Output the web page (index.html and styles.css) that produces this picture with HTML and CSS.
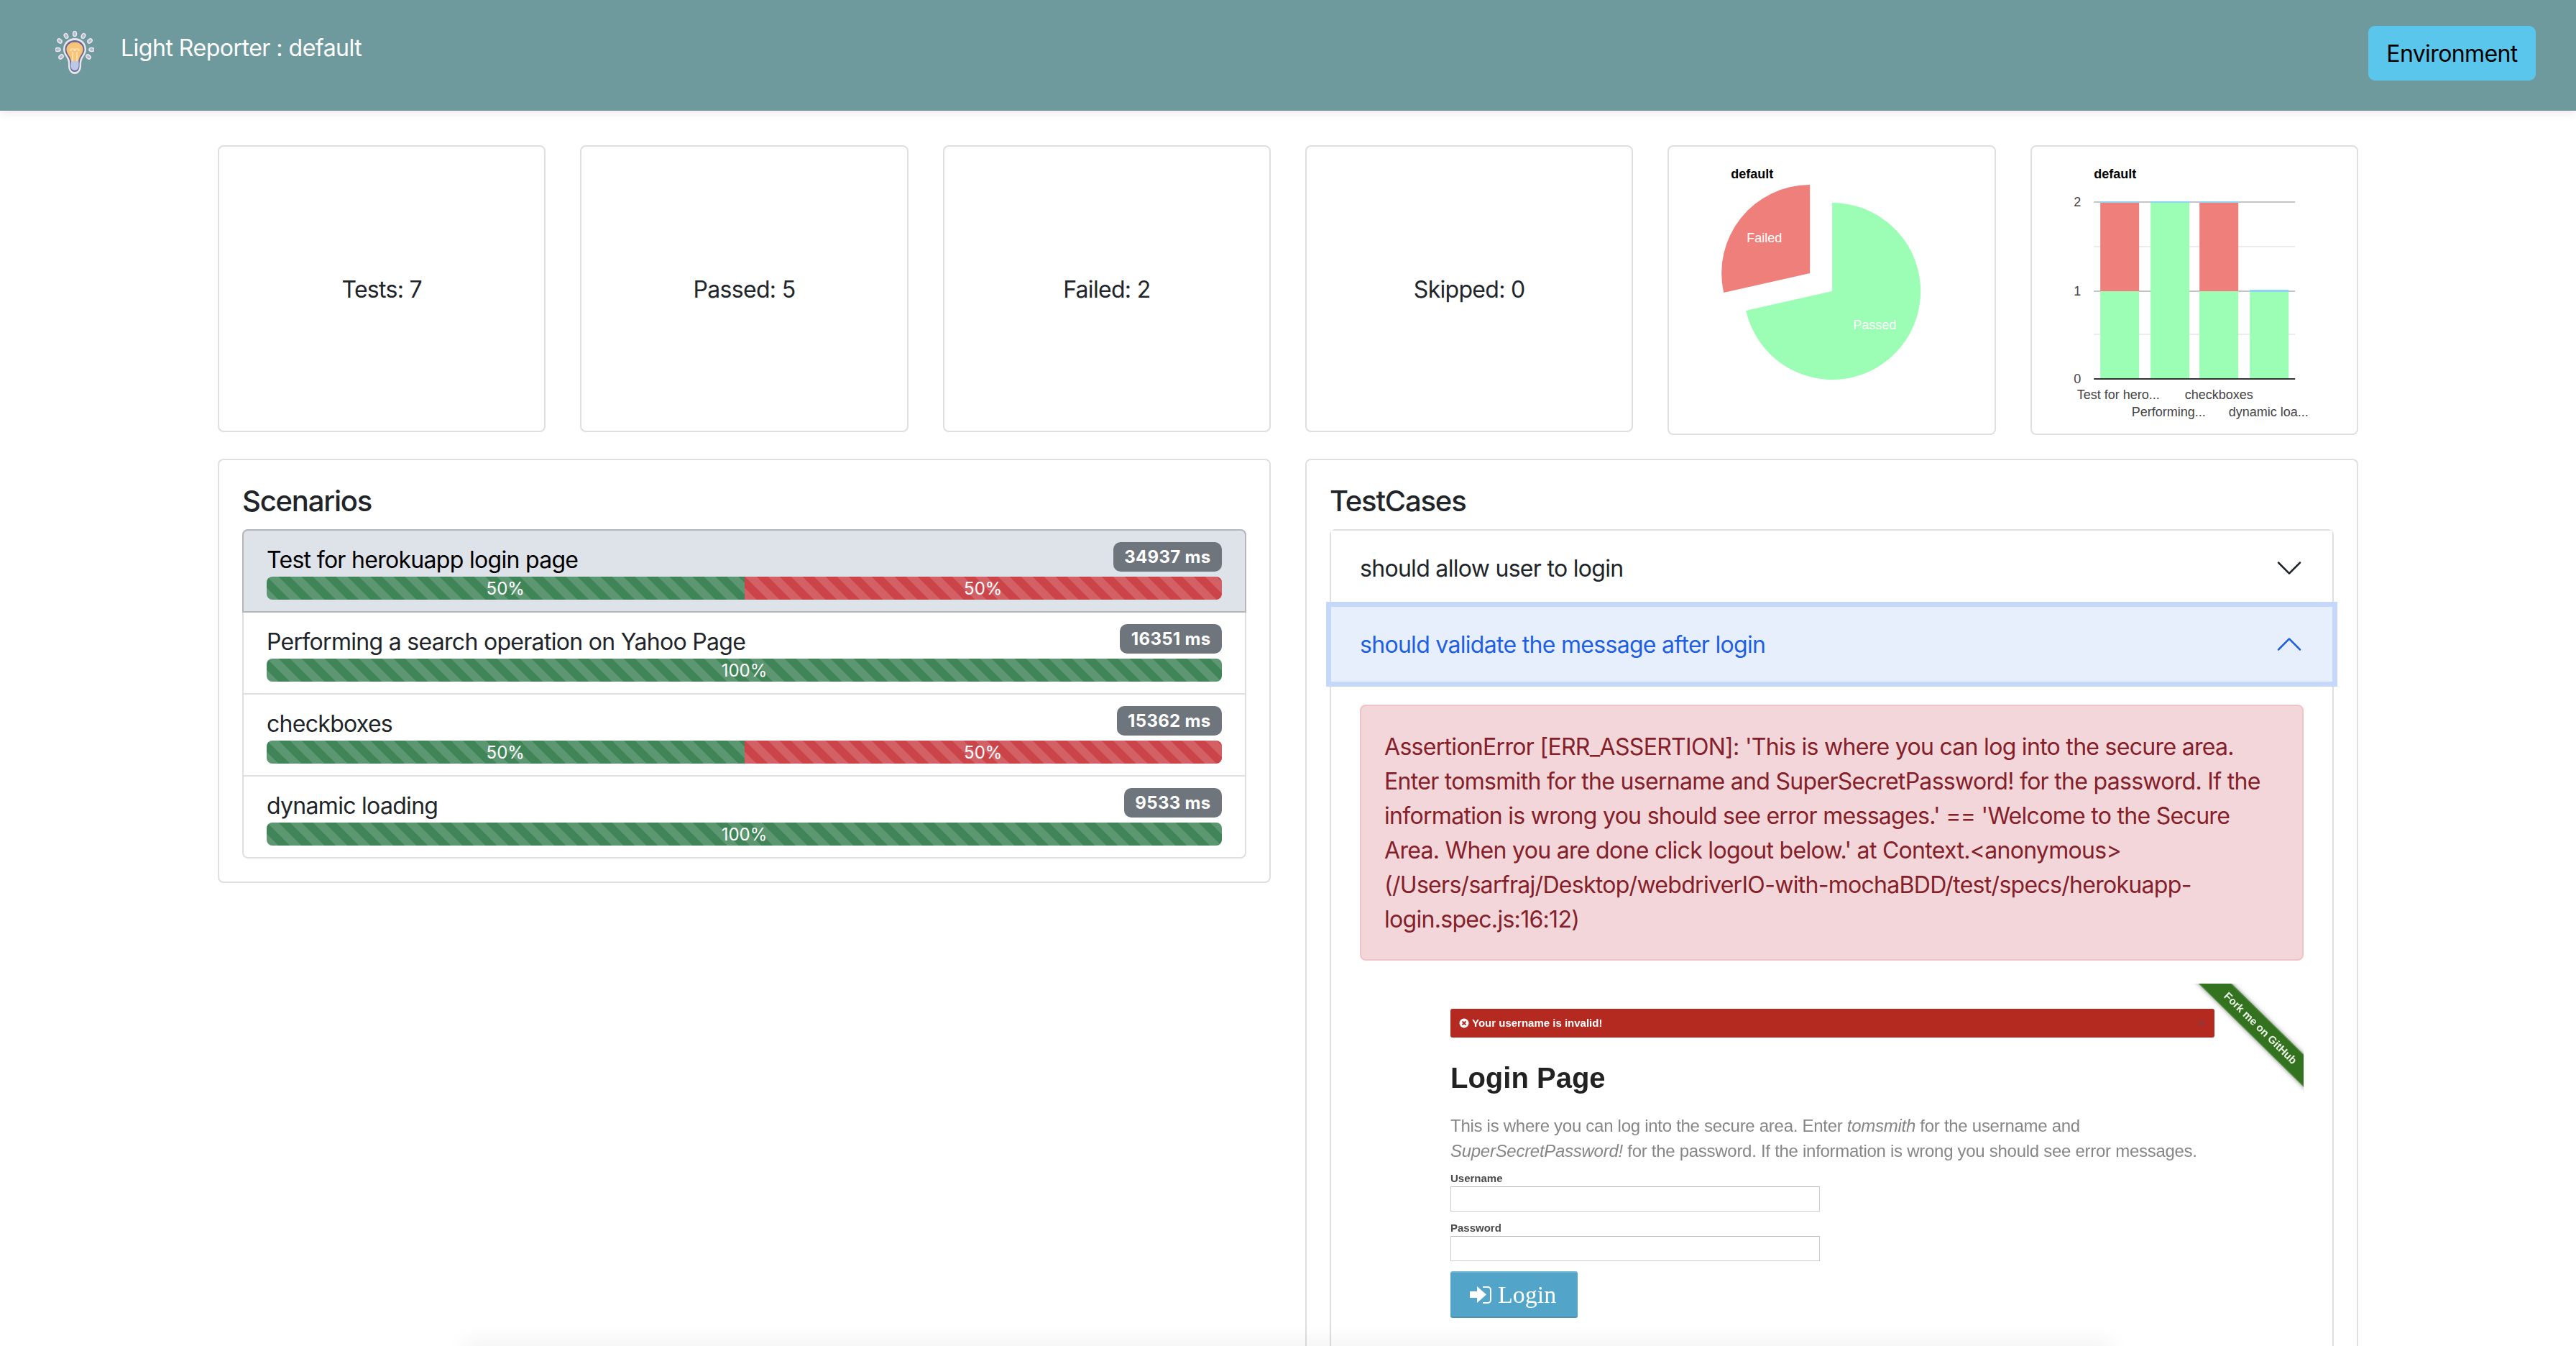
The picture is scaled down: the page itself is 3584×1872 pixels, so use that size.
FILE: index.html

```html
<!DOCTYPE html>
<html lang="en">
<head>
  <meta charset="UTF-8">
  <title>Light Reporter</title>
  <link rel="stylesheet" href="styles.css">
</head>
<body>

  <!-- Top bar -->
  <nav class="navbar">
    <div class="brand">
      <svg class="logo" viewBox="0 0 54 62">
        <g fill="#b9b6cf" stroke="#e9e9ee" stroke-width="1.500">
          <ellipse cx="27" cy="4" rx="2.500" ry="3.500"/>
          <ellipse cx="15" cy="7" rx="2.500" ry="3.500" transform="rotate(-25 15 7)"/>
          <ellipse cx="39" cy="7" rx="2.500" ry="3.500" transform="rotate(25 39 7)"/>
          <ellipse cx="6" cy="14" rx="2.500" ry="3.500" transform="rotate(-50 6 14)"/>
          <ellipse cx="48" cy="14" rx="2.500" ry="3.500" transform="rotate(50 48 14)"/>
          <ellipse cx="3.500" cy="26" rx="3.500" ry="2.500"/>
          <ellipse cx="50.500" cy="26" rx="3.500" ry="2.500"/>
          <ellipse cx="8" cy="36" rx="2.500" ry="3.500" transform="rotate(50 8 36)"/>
          <ellipse cx="46" cy="36" rx="2.500" ry="3.500" transform="rotate(-50 46 36)"/>
        </g>
        <path d="M27 10c-9.500 0-16 7-16 15.500 0 6 3.500 9.500 5.500 13.500 1.500 3 1.500 6 1.500 10 0 6 4 11 9 11s9-5 9-11c0-4 0-7 1.500-10 2-4 5.500-7.500 5.500-13.500C43 17 36.500 10 27 10z" fill="#e6e6ec"/>
        <path d="M27 13c-8 0-13.500 5.500-13.500 12.500 0 5 3 8 5 12 1.500 2.500 2 6 2 11 0 5 2.500 8.500 6.500 8.500s6.500-3.500 6.500-8.500c0-5 .5-8.500 2-11 2-4 5-7 5-12C40.500 18.500 35 13 27 13z" fill="#6a6597"/>
        <path d="M27 15.500c-6.500 0-11.500 4.500-11.500 10 0 4.500 2.800 7.500 4.800 11.500 .8 1.500 1.200 3 1.500 5h10.400c.3-2 .7-3.500 1.500-5 2-4 4.800-7 4.800-11.500 0-5.500-5-10-11.500-10z" fill="#f8c477"/>
        <path d="M22 42h10.400c.2 2 .2 4 .2 6 0 4-2 7-5.600 7s-5.500-3-5.500-7c0-2 .2-4 .5-6z" fill="#bcc8e6"/>
        <path d="M24 42V29m6 13V29M21 28a3 3 0 0 1 6 0 3 3 0 0 1 6 0" fill="none" stroke="#f9e3c0" stroke-width="1.500"/>
      </svg>
      <span class="brand-name">Light Reporter : default</span>
    </div>
    <button class="env-btn">Environment</button>
  </nav>

  <div class="content">

    <!-- Summary cards -->
    <div class="summary">
      <div class="card stat">Tests: 7</div>
      <div class="card stat">Passed: 5</div>
      <div class="card stat">Failed: 2</div>
      <div class="card stat">Skipped: 0</div>

      <div class="card chart">
        <svg viewBox="2 2 452 399">
          <text class="chart-title" x="88" y="46">default</text>
          <path d="M229 203 V80 A123 123 0 1 1 109 230 Z" fill="#9bfeb4"/>
          <path d="M198 178 V55 A123 123 0 0 0 78 205 Z" fill="#ef7f7a"/>
          <text class="slice-label" x="110" y="135">Failed</text>
          <text class="slice-label" x="258" y="256">Passed</text>
        </svg>
      </div>

      <div class="card chart">
        <svg viewBox="2 2 452 399">
          <text class="chart-title" x="88" y="46">default</text>
          <line class="grid-minor" x1="88" x2="368" y1="141" y2="141"/>
          <line class="grid-minor" x1="88" x2="368" y1="263" y2="263"/>
          <line class="grid-major" x1="88" x2="368" y1="79" y2="79"/>
          <line class="grid-major" x1="88" x2="368" y1="203" y2="203"/>

          <rect x="97" y="80" width="54" height="123" fill="#ef7f7a"/>
          <rect x="97" y="203" width="54" height="121" fill="#9bfeb4"/>
          <rect x="97" y="78" width="54" height="2" fill="#8dd4f6"/>

          <rect x="167" y="80" width="54" height="244" fill="#9bfeb4"/>
          <rect x="167" y="78" width="54" height="2" fill="#8dd4f6"/>

          <rect x="235" y="80" width="54" height="123" fill="#ef7f7a"/>
          <rect x="235" y="203" width="54" height="121" fill="#9bfeb4"/>
          <rect x="235" y="78" width="54" height="2" fill="#8dd4f6"/>

          <rect x="305" y="204" width="54" height="120" fill="#9bfeb4"/>
          <rect x="305" y="201" width="54" height="3" fill="#8dd4f6"/>

          <line class="grid-base" x1="88" x2="368" y1="325" y2="325"/>

          <text class="axis-label" x="65" y="85" text-anchor="middle">2</text>
          <text class="axis-label" x="65" y="209" text-anchor="middle">1</text>
          <text class="axis-label" x="65" y="331" text-anchor="middle">0</text>
          <text class="axis-label" x="122" y="353" text-anchor="middle">Test for hero...</text>
          <text class="axis-label" x="262" y="353" text-anchor="middle">checkboxes</text>
          <text class="axis-label" x="192" y="377" text-anchor="middle">Performing...</text>
          <text class="axis-label" x="331" y="377" text-anchor="middle">dynamic loa...</text>
        </svg>
      </div>
    </div>

    <div class="details">

      <!-- Scenarios -->
      <div class="card panel">
        <h5>Scenarios</h5>
        <ul class="list-group">
          <li class="list-item active">
            <div class="item-head"><span class="item-name">Test for herokuapp login page</span><span class="badge">34937 ms</span></div>
            <div class="progress">
              <div class="bar bar-pass" style="width: 50%">50%</div>
              <div class="bar bar-fail" style="width: 50%">50%</div>
            </div>
          </li>
          <li class="list-item">
            <div class="item-head"><span class="item-name">Performing a search operation on Yahoo Page</span><span class="badge">16351 ms</span></div>
            <div class="progress">
              <div class="bar bar-pass" style="width: 100%">100%</div>
            </div>
          </li>
          <li class="list-item">
            <div class="item-head"><span class="item-name">checkboxes</span><span class="badge">15362 ms</span></div>
            <div class="progress">
              <div class="bar bar-pass" style="width: 50%">50%</div>
              <div class="bar bar-fail" style="width: 50%">50%</div>
            </div>
          </li>
          <li class="list-item">
            <div class="item-head"><span class="item-name">dynamic loading</span><span class="badge">9533 ms</span></div>
            <div class="progress">
              <div class="bar bar-pass" style="width: 100%">100%</div>
            </div>
          </li>
        </ul>
      </div>

      <!-- Test cases -->
      <div class="card panel">
        <h5>TestCases</h5>
        <div class="accordion">
          <div class="acc-item">
            <button class="acc-btn">
              <span class="acc-title">should allow user to login</span>
              <svg class="chevron" viewBox="0 0 16 16"><path fill-rule="evenodd" d="M1.646 4.646a.5.5 0 0 1 .708 0L8 10.293l5.646-5.647a.5.5 0 0 1 .708.708l-6 6a.5.5 0 0 1-.708 0l-6-6a.5.5 0 0 1 0-.708z"/></svg>
            </button>
          </div>
          <div class="acc-item open">
            <button class="acc-btn">
              <span class="acc-title">should validate the message after login</span>
              <svg class="chevron" viewBox="0 0 16 16"><path fill-rule="evenodd" d="M1.646 4.646a.5.5 0 0 1 .708 0L8 10.293l5.646-5.647a.5.5 0 0 1 .708.708l-6 6a.5.5 0 0 1-.708 0l-6-6a.5.5 0 0 1 0-.708z"/></svg>
            </button>
            <div class="acc-body">
              <div class="alert-error">AssertionError [ERR_ASSERTION]: 'This is where you can log into the secure area. Enter tomsmith for the username and SuperSecretPassword! for the password. If the information is wrong you should see error messages.' == 'Welcome to the Secure Area. When you are done click logout below.' at Context.&lt;anonymous&gt; (/Users/sarfraj/Desktop/webdriverIO-with-mochaBDD/test/specs/herokuapp-login.spec.js:16:12)</div>

              <!-- failure screenshot -->
              <div class="shot">
                <div class="ribbon">Fork me on GitHub</div>
                <div class="shot-flash">
                  <span class="flash-msg">
                    <svg class="flash-icon" viewBox="0 0 14 14"><circle cx="7" cy="7" r="6.500" fill="#fff"/><path d="M4.500 4.500l5 5m0-5l-5 5" stroke="#b42a20" stroke-width="2"/></svg>
                    Your username is invalid!
                  </span>
                  <span class="flash-close">&#10005;</span>
                </div>
                <h2 class="shot-title">Login Page</h2>
                <p class="shot-text">This is where you can log into the secure area. Enter <em>tomsmith</em> for the username and<br><em>SuperSecretPassword!</em> for the password. If the information is wrong you should see error messages.</p>
                <label class="shot-label">Username</label>
                <div class="shot-input"></div>
                <label class="shot-label">Password</label>
                <div class="shot-input"></div>
                <div class="shot-btn">
                  <svg class="signin-icon" viewBox="0 0 31 26"><path d="M0 8h10V1l13 11.500L10 24v-7H0z" fill="#fff"/><path d="M18 1h7a5 5 0 0 1 5 5v14a5 5 0 0 1-5 5h-7v-2h7a3 3 0 0 0 3-3V6a3 3 0 0 0-3-3h-7z" fill="#fff"/></svg>
                  <span>Login</span>
                </div>
              </div>
            </div>
          </div>
        </div>
      </div>

    </div>
  </div>

  <div class="bottom-fade"></div>

</body>
</html>
```

FILE: styles.css

```css
html, body {
  height: 100%;
}

body {
  margin: 0;
  height: 1872px;
  overflow: hidden;
  position: relative;
  background: #fff;
  color: #212529;
  font-family: Inter, "Noto Sans", sans-serif;
  font-size: 32px;
  line-height: 48px;
  letter-spacing: -0.700px;
}

/* Top bar */
.navbar {
  height: 154px;
  box-sizing: border-box;
  display: flex;
  justify-content: space-between;
  align-items: flex-start;
  background: #6f9a9d;
  padding: 36px 56px 0 77px;
  box-shadow: 0 4px 12px rgba(0, 0, 0, 0.08);
}

.brand {
  display: flex;
  align-items: flex-start;
  gap: 37px;
}

.logo {
  width: 54px;
  height: 62px;
  margin-top: 7px;
  filter: blur(0.600px);
}

.brand-name {
  margin-top: 7px;
  color: #fff;
  letter-spacing: -0.500px;
}

.env-btn {
  width: 233px;
  height: 76px;
  padding: 2px 0 0;
  border: 0;
  border-radius: 9px;
  background: #5bc6ec;
  color: #000;
  font: inherit;
  letter-spacing: -0.600px;
}

.content {
  padding: 48px 303px 0 303px;
}

.card {
  box-sizing: border-box;
  border: 2px solid #dfdfdf;
  border-radius: 8px;
  background: #fff;
}

/* Summary row */
.summary {
  display: grid;
  grid-template-columns: repeat(6, 1fr);
  gap: 48px;
  align-items: start;
}

.stat {
  height: 399px;
  padding-top: 2px;
  display: flex;
  align-items: center;
  justify-content: center;
}

.chart {
  height: 403px;
}

.chart svg {
  display: block;
  width: 100%;
  height: 100%;
}

.chart text {
  font-family: "Liberation Sans", Arial, sans-serif;
  font-size: 18px;
  letter-spacing: 0;
}

.chart .chart-title {
  font-weight: bold;
  fill: #000;
}

.chart .slice-label {
  fill: #fff;
}

.chart .axis-label {
  fill: #444;
}

.grid-major {
  stroke: #c4c4c4;
  stroke-width: 2;
}

.grid-minor {
  stroke: #ebebeb;
  stroke-width: 2;
}

.grid-base {
  stroke: #333;
  stroke-width: 2;
}

/* Lower panels */
.details {
  display: grid;
  grid-template-columns: 1fr 1fr;
  gap: 48px;
  align-items: start;
  margin-top: 33px;
}

.panel {
  padding: 32px;
}

h5 {
  margin: 0 0 14px;
  font-size: 40px;
  font-weight: 500;
  line-height: 50px;
  letter-spacing: -1.200px;
}

.list-group {
  margin: 0;
  padding: 0;
  list-style: none;
  border: 2px solid #dfdfdf;
  border-radius: 8px;
}

.list-item {
  padding: 16px 32px;
  border-top: 2px solid #dfdfdf;
}

.list-item:first-child {
  border-top: 0;
}

.list-item.active {
  background: #dee2e9;
  color: #000;
  margin: -2px -2px 0;
  border: 2px solid #b4b6bc;
  border-radius: 8px 8px 0 0;
}

.list-item.active + .list-item {
  border-top: 0;
}

.item-head {
  display: flex;
  justify-content: space-between;
  align-items: flex-start;
  height: 48px;
}

.item-name {
  padding-top: 1px;
}

.badge {
  padding: 9px 15.600px 8px;
  border-radius: 10px;
  background: #6e757d;
  color: #fff;
  font-size: 24px;
  font-weight: 700;
  line-height: 24px;
  letter-spacing: 0.300px;
}

.progress {
  display: flex;
  height: 32px;
  overflow: hidden;
  border-radius: 8px;
  background: #e9ecef;
}

.bar {
  text-align: center;
  color: #fff;
  font-size: 24px;
  line-height: 34px;
  letter-spacing: 0;
  background-size: 32px 32px;
  background-image: linear-gradient(45deg, rgba(255, 255, 255, 0.15) 25%, transparent 25%, transparent 50%, rgba(255, 255, 255, 0.15) 50%, rgba(255, 255, 255, 0.15) 75%, transparent 75%, transparent);
}

.bar-pass {
  background-color: #408558;
}

.bar-fail {
  background-color: #cb444a;
}

/* Accordion */
.accordion {
  border: 2px solid #dfdfdf;
  border-radius: 8px 8px 0 0;
  border-bottom: 0;
}

.acc-item + .acc-item {
  border-top: 2px solid #dfdfdf;
}

.acc-btn {
  width: 100%;
  display: flex;
  justify-content: space-between;
  align-items: center;
  padding: 32px 40px;
  border: 0;
  background: #fff;
  color: #212529;
  font: inherit;
  line-height: 38px;
  letter-spacing: -0.700px;
  text-align: left;
}

.acc-title {
  margin-top: 2px;
}

.chevron {
  width: 40px;
  height: 40px;
  fill: currentColor;
}

.open {
  position: relative;
  border-top-color: #b0c3e6 !important;
}

.open .acc-btn {
  position: relative;
  background: #e7effd;
  color: #1f5fe0;
  box-shadow: 0 0 0 7px #c6d8f9;
}

.open .chevron {
  transform: rotate(180deg);
}

.acc-body {
  padding: 32px 40px;
}

.alert-error {
  padding: 33px 32px 31px;
  border: 2px solid #f1c3c7;
  border-radius: 8px;
  background: #f3d6d9;
  color: #842029;
}

/* The failure screenshot embedded in the test case */
.shot {
  position: relative;
  overflow: hidden;
  height: 520px;
  margin-top: 32px;
  padding: 35px 124px 0 126px;
  color: #222;
  font-family: "Liberation Sans", Arial, sans-serif;
  letter-spacing: 0;
  filter: blur(0.400px);
}

.ribbon {
  position: absolute;
  top: 46px;
  right: -90px;
  width: 300px;
  height: 32px;
  background: #33731f;
  border-top: 1px solid #5a9548;
  border-bottom: 1px solid #5a9548;
  box-sizing: border-box;
  color: #eef4ea;
  font-size: 15px;
  font-weight: bold;
  line-height: 30px;
  text-align: center;
  transform: rotate(44.500deg);
  box-shadow: 0 0 6px rgba(0, 0, 0, 0.5);
}

.shot-flash {
  display: flex;
  justify-content: space-between;
  align-items: center;
  box-sizing: border-box;
  height: 40px;
  padding: 0 12px;
  border-radius: 3px;
  background: #b42a20;
  color: #fff;
  font-size: 15px;
  font-weight: bold;
  line-height: 40px;
}

.flash-msg {
  display: flex;
  align-items: center;
  gap: 4px;
}

.flash-icon {
  width: 14px;
  height: 14px;
}

.flash-close {
  color: #8f3a3a;
  font-size: 14px;
}

.shot-title {
  margin: 33px 0 0;
  font-size: 40px;
  line-height: 46px;
}

.shot-text {
  margin: 26px 0 0;
  color: #868686;
  font-size: 24px;
  line-height: 35px;
  letter-spacing: -0.280px;
}

.shot-label {
  display: block;
  margin-top: 10px;
  color: #4a4a4a;
  font-size: 15px;
  font-weight: bold;
  line-height: 22px;
}

.shot-input {
  box-sizing: border-box;
  width: 514px;
  height: 35px;
  margin-bottom: 12px;
  border: 1px solid #ccc;
  border-top-color: #bbb;
}

.shot-btn {
  display: flex;
  align-items: center;
  gap: 8px;
  box-sizing: border-box;
  width: 177px;
  height: 65px;
  margin-top: 14px;
  padding-left: 27px;
  border-radius: 3px;
  border-top: 2px solid #74b5d3;
  border-bottom: 2px solid #4b94b4;
  background: #52a4c9;
  color: #fff;
  font-family: "Liberation Serif", serif;
  font-size: 34px;
}

.signin-icon {
  width: 31px;
  height: 26px;
}

/* Soft shadow at the bottom edge of the window */
.bottom-fade {
  position: absolute;
  left: 650px;
  right: 650px;
  bottom: -20px;
  height: 20px;
  box-shadow: 0 0 30px 6px rgba(0, 0, 0, 0.06);
}
```
